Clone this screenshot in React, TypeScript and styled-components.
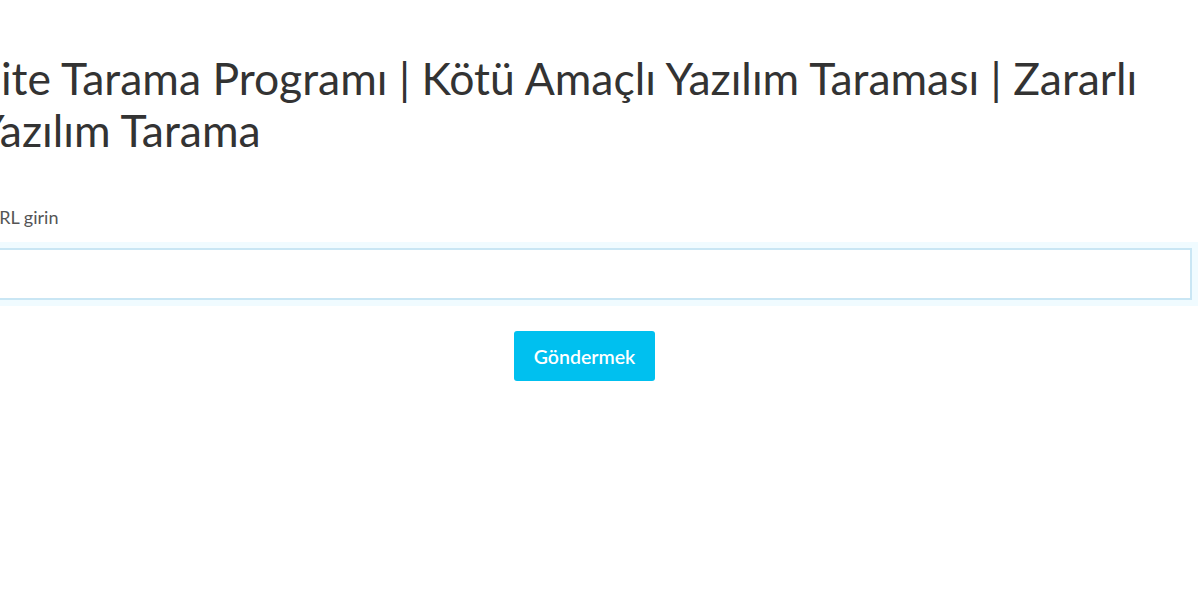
import React from 'react';
import styled, { createGlobalStyle } from 'styled-components';

const GlobalStyle = createGlobalStyle`
  html, body {
    margin: 0;
    padding: 0;
    background: #ffffff;
    overflow: hidden;
  }
  body {
    font-family: Lato, 'Open Sans', 'Liberation Sans', sans-serif;
    color: #333333;
  }
  * {
    box-sizing: border-box;
  }
`;

const Page = styled.div`
  width: 1208px;
  margin-left: -16px;
  padding-top: 52px;
`;

const Title = styled.h1`
  margin: 0 0 51px -7px;
  font-size: 44.5px;
  line-height: 52px;
  font-weight: 400;
  color: #333333;
`;

const FormGroup = styled.div`
  display: flex;
  flex-direction: column;
`;

const Label = styled.label`
  font-size: 18px;
  line-height: 21px;
  color: #555555;
  margin-bottom: 20px;
  margin-left: 2px;
`;

const Input = styled.input`
  width: 100%;
  height: 52px;
  border: 2px solid #c9e6f4;
  border-radius: 0;
  box-shadow: 0 0 0 6px #f0fbff;
  outline: none;
  padding: 0 12px;
  font-size: 16px;
  font-family: inherit;
`;

const Actions = styled.div`
  display: flex;
  justify-content: center;
  padding-right: 7px;
  margin-top: 31px;
`;

const SubmitButton = styled.button`
  width: 141px;
  height: 50px;
  background-color: #00c0ef;
  color: #ffffff;
  border: none;
  border-radius: 3px;
  font-family: inherit;
  font-size: 19.5px;
  font-weight: 600;
  cursor: pointer;
`;

const App = (): JSX.Element => (
  <>
    <GlobalStyle />
    <Page>
      <Title>Site Tarama Programı | Kötü Amaçlı Yazılım Taraması | Zararlı Yazılım Tarama</Title>
      <FormGroup>
        <Label htmlFor="url">URL girin</Label>
        <Input id="url" type="text" />
      </FormGroup>
      <Actions>
        <SubmitButton type="submit">Göndermek</SubmitButton>
      </Actions>
    </Page>
  </>
);

export default App;
